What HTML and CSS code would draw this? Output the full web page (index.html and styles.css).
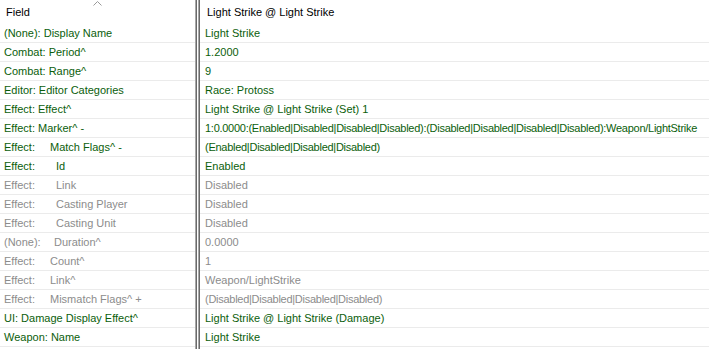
FILE: index.html
```html
<!DOCTYPE html>
<html>
<head>
<meta charset="utf-8">
<link rel="stylesheet" href="styles.css">
</head>
<body>
<div class="grid">
  <div class="col left">
    <div class="head">
      <span class="htext">Field</span>
      <svg class="sort" width="9" height="5" viewBox="0 0 9 5"><polyline points="0.5,4.5 4.5,0.5 8.5,4.5" fill="none" stroke="#9a9a9a" stroke-width="1"/></svg>
    </div>
    <div class="row g">(None): Display Name</div>
    <div class="row g">Combat: Period^</div>
    <div class="row g">Combat: Range^</div>
    <div class="row g">Editor: Editor Categories</div>
    <div class="row g">Effect: Effect^</div>
    <div class="row g">Effect: Marker^ -</div>
    <div class="row g"><span class="pre">Effect:</span><span>Match Flags^ -</span></div>
    <div class="row g"><span class="pre">Effect:</span><span class="sub">Id</span></div>
    <div class="row d"><span class="pre">Effect:</span><span class="sub">Link</span></div>
    <div class="row d"><span class="pre">Effect:</span><span class="sub">Casting Player</span></div>
    <div class="row d"><span class="pre">Effect:</span><span class="sub">Casting Unit</span></div>
    <div class="row d"><span class="pre">(None):</span><span class="dur">Duration^</span></div>
    <div class="row d"><span class="pre">Effect:</span><span>Count^</span></div>
    <div class="row d"><span class="pre">Effect:</span><span>Link^</span></div>
    <div class="row d"><span class="pre">Effect:</span><span>Mismatch Flags^ +</span></div>
    <div class="row g">UI: Damage Display Effect^</div>
    <div class="row g">Weapon: Name</div>
  </div>
  <div class="split"></div>
  <div class="col right">
    <div class="head"><span class="htext">Light Strike @ Light Strike</span></div>
    <div class="row g">Light Strike</div>
    <div class="row g">1.2000</div>
    <div class="row g">9</div>
    <div class="row g">Race: Protoss</div>
    <div class="row g">Light Strike @ Light Strike (Set) 1</div>
    <div class="row g tight">1:0.0000:(Enabled|Disabled|Disabled|Disabled):(Disabled|Disabled|Disabled|Disabled):Weapon/LightStrike</div>
    <div class="row g tight">(Enabled|Disabled|Disabled|Disabled)</div>
    <div class="row g">Enabled</div>
    <div class="row d">Disabled</div>
    <div class="row d">Disabled</div>
    <div class="row d">Disabled</div>
    <div class="row d">0.0000</div>
    <div class="row d">1</div>
    <div class="row d">Weapon/LightStrike</div>
    <div class="row d tight">(Disabled|Disabled|Disabled|Disabled)</div>
    <div class="row g">Light Strike @ Light Strike (Damage)</div>
    <div class="row g">Light Strike</div>
  </div>
</div>
</body>
</html>
```
FILE: styles.css
```css
html, body {
  margin: 0;
  padding: 0;
  background: #ffffff;
}
body {
  width: 709px;
  height: 349px;
  overflow: hidden;
  font-family: "Liberation Sans", Arial, sans-serif;
  font-size: 11px;
}
.grid {
  display: flex;
  height: 349px;
}
.col {
  display: flex;
  flex-direction: column;
}
.left {
  width: 195px;
  flex: none;
}
.right {
  flex: 1;
  min-width: 0;
}
.split {
  width: 5px;
  flex: none;
  background: linear-gradient(to right, #a8a8a8 0 1px, #6a6a6a 1px 2px, #ffffff 2px 3px, #a8a8a8 3px 4px, #6a6a6a 4px 5px);
}
.head {
  height: 24px;
  position: relative;
  display: flex;
  align-items: center;
  color: #000;
}
.left .head .htext { padding-left: 6px; }
.right .head .htext { padding-left: 7px; }
.sort {
  position: absolute;
  left: 93px;
  top: 1px;
}
.row {
  height: 18px;
  border-bottom: 1px solid #ebebeb;
  display: flex;
  align-items: center;
  white-space: nowrap;
  padding-left: 4px;
}
.right .row { padding-left: 5px; }
.tight { letter-spacing: -0.27px; }
.g { color: #0b5e0b; }
.d { color: #8c8c8c; }
.pre {
  display: inline-block;
  width: 46px;
}
.sub { padding-left: 6px; }
.dur { padding-left: 4px; }
```
